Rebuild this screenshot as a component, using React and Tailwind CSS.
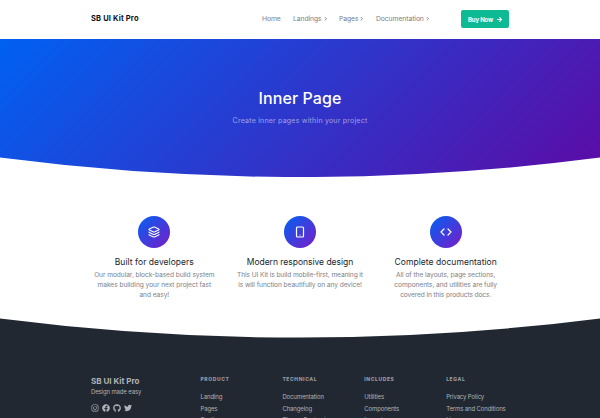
import { Layers, Smartphone, Code, ArrowRight, ChevronRight } from "lucide-react";
import { FaInstagram, FaFacebook, FaGithub, FaTwitter } from "react-icons/fa";

const features = [
  {
    icon: <Layers size={12} strokeWidth={2.3} />,
    title: "Built for developers",
    tracking: "tracking-[0.05px]",
    lines: [
      ["Our modular, block-based build system", "tracking-[-0.05px]"],
      ["makes building your next project fast", "tracking-[-0.04px]"],
      ["and easy!", "tracking-[-0.04px]"],
    ],
  },
  {
    icon: <Smartphone size={12} strokeWidth={2.4} />,
    title: "Modern responsive design",
    tracking: "tracking-[-0.02px]",
    lines: [
      ["This UI Kit is build mobile-first, meaning it", "tracking-[-0.09px]"],
      ["is will function beautifully on any device!", "tracking-[-0.06px]"],
    ],
  },
  {
    icon: <Code size={12} strokeWidth={2.4} />,
    title: "Complete documentation",
    tracking: "tracking-[0.05px]",
    lines: [
      ["All of the layouts, page sections,", "tracking-[-0.06px]"],
      ["components, and utilities are fully", "tracking-[-0.06px]"],
      ["covered in this products docs.", "tracking-[-0.1px]"],
    ],
  },
];

const columns = [
  ["PRODUCT", ["Landing", "Pages", "Sections"]],
  ["TECHNICAL", ["Documentation", "Changelog", "Theme Customizer"]],
  ["INCLUDES", ["Utilities", "Components", "Layouts"]],
  ["LEGAL", ["Privacy Policy", "Terms and Conditions", "License"]],
];

function NavItem({ label, width, arrow = true }) {
  return (
    <a className={`flex items-center gap-[1px] ${width}`}>
      {label}
      {arrow && <ChevronRight size={5.5} strokeWidth={4} />}
    </a>
  );
}

export default function App() {
  return (
    <div className="flex h-[418px] w-[600px] flex-col overflow-hidden whitespace-nowrap bg-white font-['Inter',sans-serif] text-[#7b8088]">
      <nav className="flex h-[39px] shrink-0 items-center pb-px pl-[91px] text-[6.8px] tracking-[-0.08px]">
        <div className="w-[171px] text-[7.5px] font-bold tracking-[0.18px] text-[#0b0f19]">SB UI Kit Pro</div>
        <NavItem label="Home" width="w-[31px]" arrow={false} />
        <NavItem label="Landings" width="w-[46px]" />
        <NavItem label="Pages" width="w-[37px]" />
        <NavItem label="Documentation" width="w-[84.5px]" />
        <button className="flex h-[18px] w-[48px] items-center gap-[3px] rounded-[2px] bg-[#0dba94] pl-[7.5px] text-[6px] font-bold tracking-[-0.15px] text-white">
          Buy Now <ArrowRight size={7} strokeWidth={3.5} />
        </button>
      </nav>

      <header className="flex h-[138px] shrink-0 flex-col items-center overflow-hidden bg-[linear-gradient(135deg,#0061f2_0%,#5c0ba5_100%)]">
        <h1 className="mt-[49px] text-[16px] font-medium leading-[20px] tracking-[0.08px] text-white">Inner Page</h1>
        <p className="mt-[8px] text-[7px] leading-[10px] tracking-[0.22px] text-[#ffffff88]">Create inner pages within your project</p>
        <svg className="mt-[31px] h-[20px] w-[600px] shrink-0" viewBox="0 0 600 20">
          <path d="M0 .6Q300 39.5 600 .6V20H0Z" fill="#fff" />
        </svg>
      </header>

      <main className="flex h-[141px] shrink-0 justify-center pt-[39px]">
        {features.map((f) => (
          <section key={f.title} className="flex w-[145.7px] flex-col items-center">
            <div className="flex h-8 w-8 shrink-0 items-center justify-center rounded-full bg-[linear-gradient(135deg,#0061f2,#7a1cc8)] text-white">
              {f.icon}
            </div>
            <h2 className={`mt-[8px] text-[8.5px] leading-[12px] text-[#20262f] ${f.tracking}`}>{f.title}</h2>
            <div className="mt-[3px] text-center text-[6.6px] leading-[9.75px] text-[#7b818a]">
              {f.lines.map(([text, tracking]) => (
                <p key={text} className={tracking}>{text}</p>
              ))}
            </div>
          </section>
        ))}
      </main>

      <footer className="flex h-[100px] shrink-0 flex-col bg-[#212832] text-[#b0b3b7]">
        <svg className="h-[20px] w-[600px] shrink-0" viewBox="0 0 600 20">
          <path d="M0 0V.4Q300 38.8 600 .4V0Z" fill="#fff" />
        </svg>
        <div className="flex pl-[91px] pt-[36px]">
          <div className="w-[109.5px]">
            <div className="mt-px text-[8px] font-bold leading-[12px]">SB UI Kit Pro</div>
            <div className="text-[6px] leading-[10px] tracking-[-0.13px]">Design made easy</div>
            <div className="mt-[7px] flex gap-[3px] text-[8px]">
              <FaInstagram />
              <FaFacebook />
              <FaGithub />
              <FaTwitter />
            </div>
          </div>
          {columns.map(([title, links]) => (
            <div key={title} className="w-[81.9px] text-[6px] tracking-[-0.13px]">
              <div className="mb-[6px] text-[5px] font-extrabold leading-[11px] tracking-[0.6px] text-[#979ba0]">{title}</div>
              {links.map((link) => (
                <div key={link} className="leading-[11.6px]">{link}</div>
              ))}
            </div>
          ))}
        </div>
      </footer>
    </div>
  );
}
